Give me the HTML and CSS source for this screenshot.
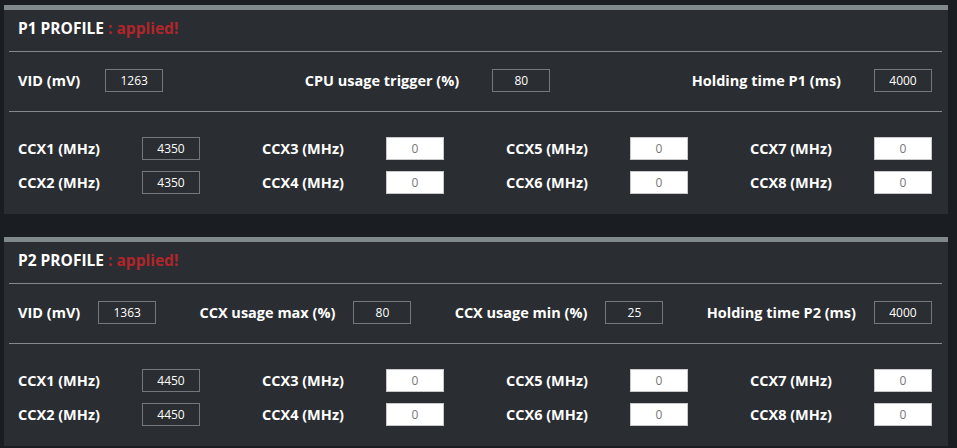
FILE: index.html
```html
<!DOCTYPE html>
<html lang="en">
<head>
    <meta charset="UTF-8">
    <meta name="viewport" content="width=device-width, initial-scale=1.0">
    <title>Profiles</title>
    <link rel="stylesheet" href="styles.css">
</head>
<body>
    <div class="profile">
        <div class="profile-title">P1 PROFILE <span class="status">: applied!</span></div>
        <div class="main-row">
            <div class="field gap-sm"><label>VID (mV)</label><input class="box" type="text" value="1263"></div>
            <div class="field gap-md"><label>CPU usage trigger (%)</label><input class="box" type="text" value="80"></div>
            <div class="field gap-md"><label>Holding time P1 (ms)</label><input class="box" type="text" value="4000"></div>
        </div>
        <div class="ccx-grid">
            <div class="field"><label>CCX1 (MHz)</label><input class="box" type="text" value="4350"></div>
            <div class="field"><label>CCX3 (MHz)</label><input class="box light" type="text" value="0"></div>
            <div class="field"><label>CCX5 (MHz)</label><input class="box light" type="text" value="0"></div>
            <div class="field"><label>CCX7 (MHz)</label><input class="box light" type="text" value="0"></div>
            <div class="field"><label>CCX2 (MHz)</label><input class="box" type="text" value="4350"></div>
            <div class="field"><label>CCX4 (MHz)</label><input class="box light" type="text" value="0"></div>
            <div class="field"><label>CCX6 (MHz)</label><input class="box light" type="text" value="0"></div>
            <div class="field"><label>CCX8 (MHz)</label><input class="box light" type="text" value="0"></div>
        </div>
    </div>

    <div class="profile">
        <div class="profile-title">P2 PROFILE <span class="status">: applied!</span></div>
        <div class="main-row">
            <div class="field"><label>VID (mV)</label><input class="box" type="text" value="1363"></div>
            <div class="field"><label>CCX usage max (%)</label><input class="box" type="text" value="80"></div>
            <div class="field"><label>CCX usage min (%)</label><input class="box" type="text" value="25"></div>
            <div class="field"><label>Holding time P2 (ms)</label><input class="box" type="text" value="4000"></div>
        </div>
        <div class="ccx-grid">
            <div class="field"><label>CCX1 (MHz)</label><input class="box" type="text" value="4450"></div>
            <div class="field"><label>CCX3 (MHz)</label><input class="box light" type="text" value="0"></div>
            <div class="field"><label>CCX5 (MHz)</label><input class="box light" type="text" value="0"></div>
            <div class="field"><label>CCX7 (MHz)</label><input class="box light" type="text" value="0"></div>
            <div class="field"><label>CCX2 (MHz)</label><input class="box" type="text" value="4450"></div>
            <div class="field"><label>CCX4 (MHz)</label><input class="box light" type="text" value="0"></div>
            <div class="field"><label>CCX6 (MHz)</label><input class="box light" type="text" value="0"></div>
            <div class="field"><label>CCX8 (MHz)</label><input class="box light" type="text" value="0"></div>
        </div>
    </div>
</body>
</html>
```

FILE: styles.css
```css
body {
    font-family: "Open Sans", "Noto Sans", sans-serif;
    margin: 0;
    padding: 5px 9px 0 4px;
    background-color: #1a1d21;
    color: #fff;
    overflow: hidden;
}

.profile {
    background-color: #2a2d31;
    border-top: 5px solid #7f888b;
    padding: 0 6px 0 5px;
    margin-bottom: 23px;
}

.profile-title {
    height: 41px;
    line-height: 37px;
    padding-left: 9px;
    font-size: 15.5px;
    font-weight: bold;
    border-bottom: 1px solid #85898d;
}

.status {
    color: #b0262c;
}

.main-row {
    display: flex;
    justify-content: space-between;
    align-items: center;
    padding: 17px 10px 19px 9px;
    border-bottom: 1px solid #85898d;
}

.field {
    display: flex;
    align-items: center;
    gap: 18px;
}

.field.gap-sm {
    gap: 25px;
}

.field.gap-md {
    gap: 33px;
}

.field label {
    font-size: 14.5px;
    font-weight: bold;
    white-space: nowrap;
}

.box {
    box-sizing: border-box;
    width: 58px;
    height: 23px;
    padding: 0;
    border: 1px solid #74787c;
    background-color: transparent;
    color: #fff;
    font-family: "Open Sans", "Noto Sans", sans-serif;
    font-size: 12px;
    text-align: center;
    outline: none;
}

.box.light {
    background-color: #fff;
    border-color: #c8c8c8;
    color: #777;
}

.ccx-grid {
    display: grid;
    grid-template-columns: repeat(4, 1fr);
    column-gap: 62px;
    row-gap: 11px;
    padding: 25px 10px 20px 9px;
}

.ccx-grid .field {
    justify-content: space-between;
}
```
